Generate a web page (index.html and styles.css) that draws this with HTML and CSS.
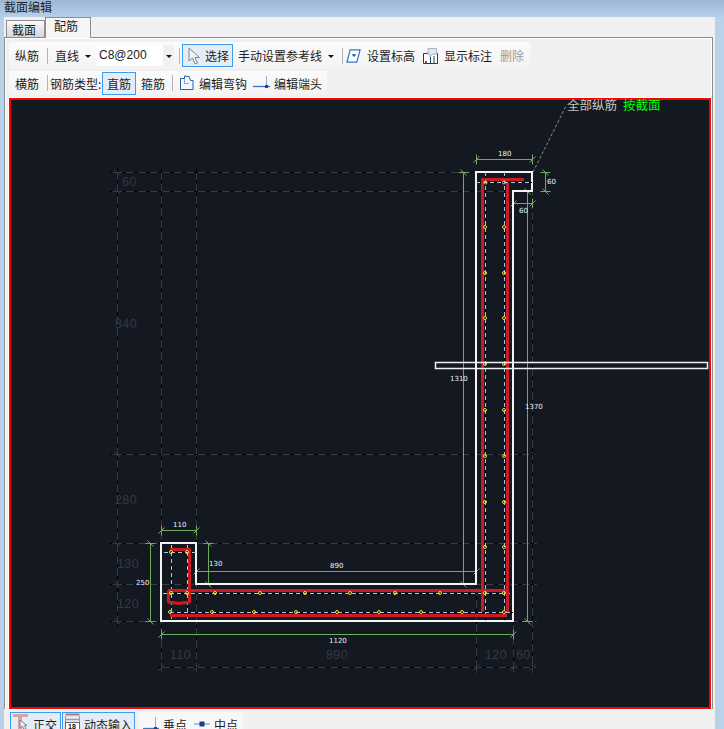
FILE: index.html
```html
<!DOCTYPE html>
<html lang="zh-CN">
<head>
    <meta charset="UTF-8">
    <title>截面编辑</title>
    <link rel="stylesheet" href="styles.css">
</head>
<body>

<div class="titlebar">截面编辑</div>

<div class="client">
    <div class="tabs">
        <div class="tab">截面</div>
        <div class="tab active">配筋</div>
    </div>

    <div class="panel">
        <div class="toolbar row-one">
            <span class="tool label">纵筋</span>
            <span class="sep"></span>
            <span class="tool plain">直线</span>
            <span class="arrow"></span>
            <span class="combo"><span class="combo-text">C8@200</span><span class="combo-btn"></span></span>
            <span class="sep sep-combo"></span>
            <span class="tool picked pick-select">
                <svg class="icon" width="12" height="18" viewBox="0 0 12 18"><path d="M1 1V14L4.500 11L7 17L9.500 16L7 10.500H11.500Z" fill="#eef2f7" stroke="#85858f"/></svg>
                选择
            </span>
            <span class="tool plain ref-line">手动设置参考线</span>
            <span class="arrow"></span>
            <span class="sep"></span>
            <span class="tool icon-tool first-icon">
                <svg width="15" height="16" viewBox="0 0 16 16"><path d="M4.500 1.500H15L11.500 14.500H1Z" fill="#fff" stroke="#2b78c8" stroke-width="1.300"/><path d="M6 6H11L8.500 9Z" fill="#1d4f92"/></svg>
                设置标高
            </span>
            <span class="tool icon-tool">
                <svg width="15" height="17" viewBox="0 0 15 17"><path d="M.5 6.500H14.500V16.500H.5Z" fill="#fff" stroke="#17406f"/><path d="M7.500 9V16M11 9V16" stroke="#17406f"/><path d="M2 14H4V16H2Z" fill="#d0301c"/><path d="M5 1.500H13.500V7L9 7.500L7 10V7.500H5Z" fill="#dfe6ee" stroke="#aab4c0"/></svg>
                显示标注
            </span>
            <span class="tool disabled">删除</span>
        </div>

        <div class="toolbar row-two">
            <span class="tool label">横筋</span>
            <span class="sep"></span>
            <span class="tool type-label">钢筋类型:</span>
            <span class="tool picked pick-straight">直筋</span>
            <span class="tool stirrup">箍筋</span>
            <span class="sep sep-stirrup"></span>
            <span class="tool icon-tool hook-tool">
                <svg width="15" height="16" viewBox="0 0 15 16"><path d="M1.500 3.500H5.500V1L10 1.500L11.500 5.500H14V14.500H1.500Z" fill="#f4f7fb" stroke="#2c5f9e"/><path d="M5.500 3.500V8.500H10" fill="none" stroke="#8aa8cc"/></svg>
                编辑弯钩
            </span>
            <span class="tool icon-tool end-tool">
                <svg width="17" height="14" viewBox="0 0 17 14"><path d="M0 10.500H17" stroke="#3a78c4" stroke-width="1.300"/><path d="M13.500 0V10" stroke="#8ab0dc"/><circle cx="13.500" cy="10.500" r="1.800" fill="#1d3f86"/></svg>
                编辑端头
            </span>
        </div>

        <div class="canvas">
            <svg class="drawing" width="698" height="607" viewBox="11 100 698 607">
                <defs>
                    <path id="th" d="M-3 3L3-3M0-5V5"/>
                    <path id="tv" d="M-5 0H5M-3-3L3 3"/>
                    <path id="grid" d="M110 172.500H476M110 191.500H506M110 454.500H535M110 543.500H537M110 584.500H537M110 621.500H537M158 667.500H536M117.500 168V626M161.500 168V673M196.500 168V673M476.500 584V673M513.500 621V673M532.500 172V673"/>
                    <path id="rebar-axis" d="M485.500 172V621M504.500 172V621M476 182.500H532M163 593.500H511M170 612.500H513M171.500 545V620M187.500 545V620M164 552.500H196"/>
                    <circle id="dot" r="1.500"/>
                </defs>

                <!-- faint axis grid -->
                <g class="grid">
                    <use href="#grid" class="grid-base"/>
                    <use href="#grid" class="grid-dash"/>
                    <g class="grid-base">
                        <use href="#tv" x="117.500" y="172.500"/><use href="#tv" x="117.500" y="191.500"/>
                        <use href="#tv" x="117.500" y="454.500"/><use href="#tv" x="117.500" y="543.500"/>
                        <use href="#tv" x="117.500" y="584.500"/><use href="#tv" x="117.500" y="621.500"/>
                        <use href="#th" x="161.500" y="667.500"/><use href="#th" x="196.500" y="667.500"/>
                        <use href="#th" x="476.500" y="667.500"/><use href="#th" x="513.500" y="667.500"/>
                        <use href="#th" x="532.500" y="667.500"/>
                    </g>
                </g>
                <g class="grid-text">
                    <text x="122" y="186">60</text>
                    <text x="115" y="328">840</text>
                    <text x="115" y="504">280</text>
                    <text x="117" y="568">130</text>
                    <text x="117" y="608">120</text>
                    <text x="170" y="659">110</text>
                    <text x="326" y="659">890</text>
                    <text x="485" y="659">120</text>
                    <text x="516" y="659">60</text>
                </g>

                <!-- leader -->
                <path class="leader" d="M533 172L566 106"/>
                <text class="note" x="567" y="110">全部纵筋</text>
                <text class="note note-on" x="623" y="110">按截面</text>

                <!-- dimensions -->
                <g class="dim">
                    <path d="M476.500 159.500H532.500M545.500 172.500V191.500M513.500 203.500H532.500M463.500 172.500V584.500M527.500 191.500V621.500M161.500 530.500H196.500M150.500 543.500V621.500M208.500 543.500V584.500M196.500 571.500H476.500M161.500 634.500H513.500"/>
                    <use href="#th" x="476.500" y="159.500"/><use href="#th" x="532.500" y="159.500"/>
                    <use href="#tv" x="545.500" y="172.500"/><use href="#tv" x="545.500" y="191.500"/>
                    <use href="#th" x="513.500" y="203.500"/><use href="#th" x="532.500" y="203.500"/>
                    <use href="#tv" x="463.500" y="172.500"/><use href="#tv" x="463.500" y="584.500"/>
                    <use href="#tv" x="527.500" y="191.500"/><use href="#tv" x="527.500" y="621.500"/>
                    <use href="#th" x="161.500" y="530.500"/><use href="#th" x="196.500" y="530.500"/>
                    <use href="#tv" x="150.500" y="543.500"/><use href="#tv" x="150.500" y="621.500"/>
                    <use href="#tv" x="208.500" y="543.500"/><use href="#tv" x="208.500" y="584.500"/>
                    <use href="#th" x="196.500" y="571.500"/><use href="#th" x="476.500" y="571.500"/>
                    <use href="#th" x="161.500" y="634.500"/><use href="#th" x="513.500" y="634.500"/>
                </g>
                <g class="dim-text">
                    <text x="498" y="156">180</text>
                    <text x="547" y="184">60</text>
                    <text x="519" y="213">60</text>
                    <text x="450" y="381">1310</text>
                    <text x="525" y="409">1370</text>
                    <text x="173" y="527">110</text>
                    <text x="136" y="585">250</text>
                    <text x="209" y="566">130</text>
                    <text x="330" y="568">890</text>
                    <text x="329" y="643">1120</text>
                </g>

                <!-- section outline -->
                <path class="outline" d="M476 172H532V191H513V621H161V543H196V584H476Z"/>

                <!-- rebar axes -->
                <use href="#rebar-axis" class="axis-base"/>
                <use href="#rebar-axis" class="axis-dash"/>

                <!-- bars -->
                <path class="rebar" d="M524 179.500H482.500V612M507.500 183V612M168 590.500H507.500M170 615.500H507M170 549.500H189.500V602L179 603.500L168.500 602V590.500"/>

                <!-- rebar points -->
                <g class="dots">
                    <use href="#dot" x="485.500" y="182.500"/><use href="#dot" x="504" y="182.500"/>
                    <use href="#dot" x="485" y="227"/><use href="#dot" x="504" y="227"/>
                    <use href="#dot" x="485" y="273"/><use href="#dot" x="504" y="273"/>
                    <use href="#dot" x="485" y="318"/><use href="#dot" x="504" y="318"/>
                    <use href="#dot" x="485" y="364"/><use href="#dot" x="504" y="364"/>
                    <use href="#dot" x="485" y="410"/><use href="#dot" x="504" y="410"/>
                    <use href="#dot" x="485" y="456"/><use href="#dot" x="504" y="456"/>
                    <use href="#dot" x="485" y="502"/><use href="#dot" x="504" y="502"/>
                    <use href="#dot" x="485" y="547"/><use href="#dot" x="504" y="547"/>
                    <use href="#dot" x="171" y="552"/><use href="#dot" x="187" y="552"/>
                    <use href="#dot" x="171" y="593"/><use href="#dot" x="187" y="593"/>
                    <use href="#dot" x="215" y="593"/><use href="#dot" x="260" y="593"/>
                    <use href="#dot" x="305" y="593"/><use href="#dot" x="350" y="593"/>
                    <use href="#dot" x="395" y="593"/><use href="#dot" x="440" y="593"/>
                    <use href="#dot" x="485" y="593"/><use href="#dot" x="504" y="593"/>
                    <use href="#dot" x="170" y="612"/><use href="#dot" x="212" y="612"/>
                    <use href="#dot" x="254" y="612"/><use href="#dot" x="296" y="612"/>
                    <use href="#dot" x="337" y="612"/><use href="#dot" x="379" y="612"/>
                    <use href="#dot" x="421" y="612"/><use href="#dot" x="462" y="612"/>
                    <use href="#dot" x="504" y="612"/>
                </g>

                <!-- section cut -->
                <rect class="cut" x="435.500" y="362.500" width="272" height="6"/>
            </svg>
        </div>
    </div>

    <div class="statusbar">
        <span class="tool picked pick-ortho">
            <svg width="16" height="17" viewBox="0 0 16 17"><path d="M0 1H15V4H9V17H5V4H0Z" fill="#d9a3a3"/><path d="M7 7V15L9.500 13L11 16.500L13 15.500L11.500 12.500H14Z" fill="#eef2f7" stroke="#85858f"/></svg>
            正交
        </span>
        <span class="tool picked pick-input">
            <svg width="15" height="17" viewBox="0 0 15 17"><path d="M.5 1.500H14.500" stroke="#b07a7a" stroke-width="2"/><path d="M.5 3V9M14.500 3V9" stroke="#999"/><path d="M1 6.500H14" stroke="#c88" stroke-width="1.500"/><rect x=".5" y="9.500" width="14" height="8" fill="#fff" stroke="#666"/><text class="mini" x="3" y="16">18</text></svg>
            动态输入
        </span>
        <span class="snap-group">
            <span class="tool icon-tool">
                <svg width="16" height="14" viewBox="0 0 16 14"><path d="M0 11.500H16" stroke="#3a78c4" stroke-width="1.300"/><path d="M12.500 0V11" stroke="#8ab0dc"/><circle cx="12.500" cy="11.500" r="1.800" fill="#1d3f86"/></svg>
                垂点
            </span>
            <span class="tool icon-tool">
                <svg width="16" height="8" viewBox="0 0 16 8"><path d="M0 4H16" stroke="#8ab0dc" stroke-width="1.500"/><rect x="5.500" y="1.500" width="5" height="5" fill="#1d3f86"/></svg>
                中点
            </span>
        </span>
    </div>
</div>

</body>
</html>
```

FILE: styles.css
```css
html, body {
    margin: 0;
    height: 729px;
    overflow: hidden;
}

body {
    width: 724px;
    background: #b9d1ea;
    font-family: "Noto Sans CJK SC", "Liberation Sans", sans-serif;
    font-size: 12px;
    color: #1c1c1c;
}

.titlebar {
    height: 17px;
    line-height: 14px;
    padding-left: 4px;
    background: linear-gradient(#9db8d5, #b6cee8);
    color: #222;
}

.client {
    margin-left: 4px;
    width: 711px;
    height: 712px;
    background: #f0f0f0;
    overflow: hidden;
}

.tabs {
    display: flex;
    align-items: flex-end;
    height: 20px;
    padding-left: 2px;
}

.tab {
    width: 39px;
    height: 17px;
    line-height: 18px;
    padding-left: 5px;
    box-sizing: border-box;
    border: 1px solid #8d8d8d;
    border-bottom: none;
    background: linear-gradient(#fbfbfb, #d6d6d6);
}

.tab.active {
    position: relative;
    z-index: 1;
    width: 46px;
    height: 21px;
    line-height: 16px;
    padding-left: 8px;
    margin-bottom: -1px;
    background: #f6f6f6;
}

.panel {
    display: flex;
    flex-direction: column;
    width: 709px;
    height: 672px;
    box-sizing: border-box;
    padding: 4px 1px 0 4px;
    border: 1px solid #8d8d8d;
    border-bottom: none;
    box-shadow: inset 1px 1px 0 #fff, inset -1px 0 0 #fff;
}

.toolbar {
    display: flex;
    align-items: center;
    align-self: flex-start;
    border-radius: 3px;
    background: linear-gradient(#fbfbfb, #f3f3f3);
}

.row-one {
    height: 27px;
    padding-right: 6px;
    margin-bottom: 2px;
}

.row-two {
    height: 24px;
    padding-right: 5px;
    margin-bottom: 3px;
}

.tool {
    display: flex;
    align-items: center;
    white-space: nowrap;
}

.label {
    padding: 0 6px;
}

.plain {
    padding-left: 5px;
}

.sep {
    width: 1px;
    height: 16px;
    margin: 0 2px;
    background: #b4b4b4;
}

.sep-combo {
    margin-left: 5px;
}

.arrow {
    width: 18px;
    height: 0;
    position: relative;
}

.arrow::after, .combo-btn::after {
    content: "";
    position: absolute;
    top: -1px;
    left: 6px;
    border: 3px solid transparent;
    border-top-color: #111;
}

.combo {
    display: flex;
    align-items: stretch;
    width: 77px;
    height: 21px;
    background: #fff;
}

.combo-text {
    flex: 1;
    padding-left: 2px;
    font-family: "Liberation Sans", sans-serif;
    line-height: 21px;
}

.combo-btn {
    position: relative;
    width: 11px;
    background: #f1f1f1;
}

.combo-btn::after {
    top: 10px;
    left: 3px;
}

.picked {
    box-sizing: border-box;
    border: 1px solid #3e9cf0;
    background: #e4edf7;
}

.pick-select {
    width: 51px;
    height: 23px;
    padding-left: 5px;
    gap: 5px;
}

.ref-line {
    padding-left: 5px;
}

.icon-tool {
    gap: 6px;
    margin-left: 8px;
}

.first-icon {
    margin-left: 1px;
}

.disabled {
    margin-left: 8px;
    color: #9a9a9a;
}

.type-label {
    margin-left: 0;
    width: 52px;
}

.pick-straight {
    width: 34px;
    height: 23px;
    justify-content: center;
}

.stirrup {
    margin-left: 5px;
}

.sep-stirrup {
    margin-left: 7px;
}

.hook-tool {
    margin-left: 4px;
    gap: 5px;
}

.end-tool {
    gap: 4px;
    margin-left: 6px;
}

/* drawing area */
.canvas {
    width: 702px;
    height: 611px;
    box-sizing: border-box;
    border: 2px solid #f00;
    background: #141820;
    box-shadow: 0 0 0 1px #fff;
}

.drawing {
    display: block;
    fill: none;
    overflow: visible;
}

.grid-base {
    stroke: #333a46;
}

.grid-dash {
    stroke: #000;
    stroke-dasharray: 4 8;
}

.grid-text text {
    font-family: "Liberation Sans", sans-serif;
    font-size: 12.500px;
    letter-spacing: .4px;
    fill: #333944;
}

.leader {
    stroke: #8a8a8a;
    stroke-dasharray: 3 2;
}

.note {
    font-size: 12.500px;
    fill: #c4c4c4;
}

.note-on {
    fill: #00ff00;
}

.dim {
    stroke: #6dad59;
}

.dim-text text {
    font-family: "DejaVu Sans", sans-serif;
    font-size: 7px;
    fill: #e8f2ff;
}

.outline {
    stroke: #f4f4f4;
    stroke-width: 2;
}

.axis-base {
    stroke: #000;
}

.axis-dash {
    stroke: #9ccbf2;
    stroke-dasharray: 4 3;
}

.rebar {
    stroke: #cb1a22;
    stroke-width: 3;
    stroke-linejoin: round;
}

.dots {
    stroke: #ffdf20;
}

.cut {
    stroke: #f0f0f0;
    stroke-width: 1.500;
}

/* bottom bar */
.statusbar {
    display: flex;
    align-items: flex-start;
    padding: 3px 0 0 6px;
}

.pick-ortho {
    width: 51px;
    height: 24px;
    padding-left: 2px;
    gap: 4px;
    align-items: flex-start;
    line-height: 24px;
}

.pick-input {
    width: 73px;
    height: 24px;
    margin-left: 1px;
    padding-left: 2px;
    gap: 4px;
    align-items: flex-start;
    line-height: 24px;
}

.mini {
    font-family: "Liberation Sans", sans-serif;
    font-size: 7px;
    font-weight: bold;
    fill: #111;
}

.snap-group {
    display: flex;
    margin-left: 4px;
    width: 104px;
    height: 24px;
    background: #f8f8f8;
}

.snap-group .icon-tool {
    margin-left: 4px;
    margin-right: 3px;
    gap: 4px;
}
```
